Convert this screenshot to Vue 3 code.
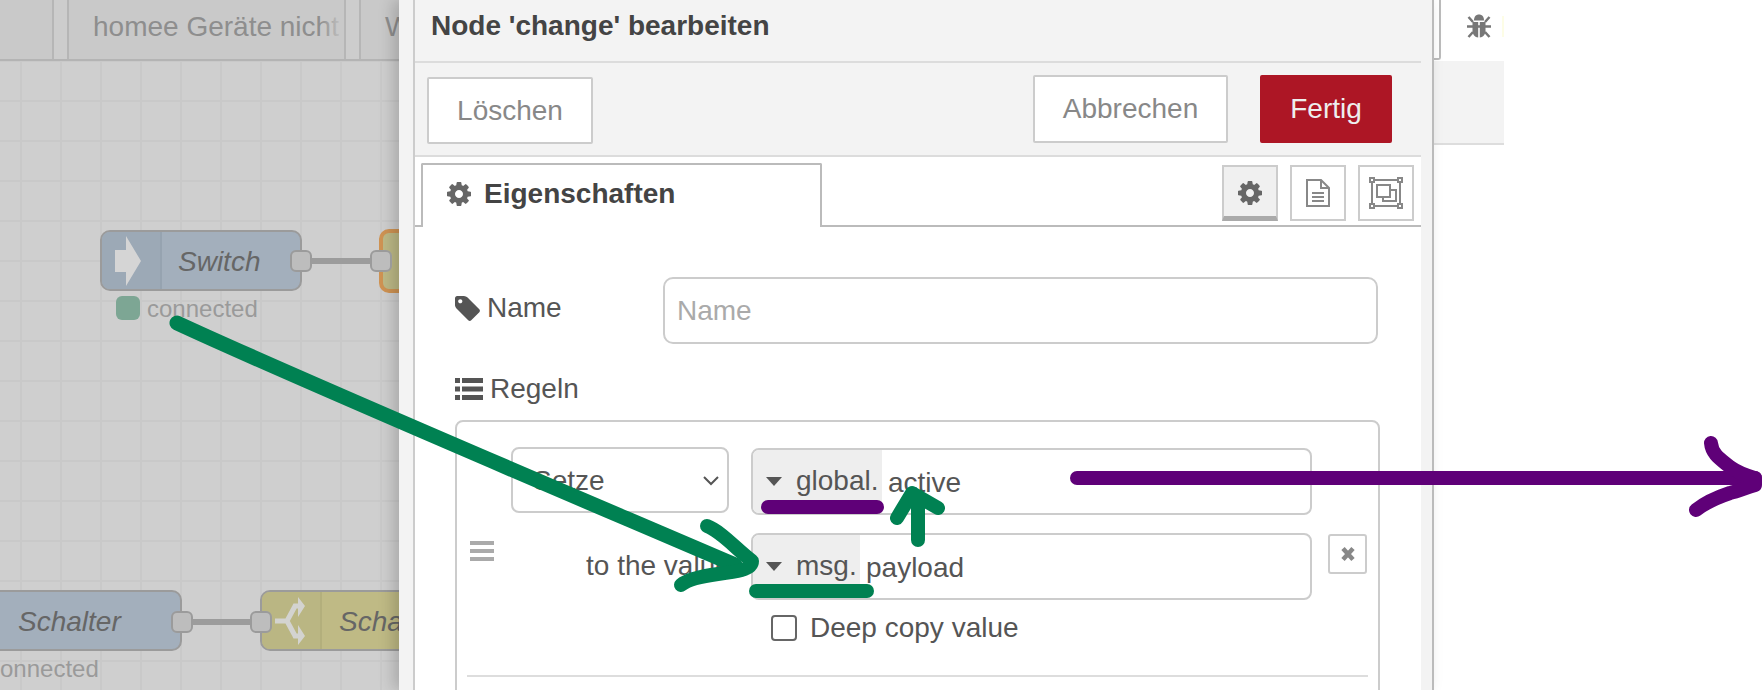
<script setup>
const gear = "M1152 896q0-106-75-181t-181-75-181 75-75 181 75 181 181 75 181-75 75-181zm512-109v222q0 12-8 23t-20 13l-185 28q-19 54-39 91 35 50 107 138 10 12 10 25t-9 23q-27 37-99 108t-94 71q-12 0-26-9l-138-108q-44 23-91 38-16 136-29 186-7 28-36 28h-222q-14 0-24.5-8.5t-11.5-21.5l-28-184q-49-16-90-37l-141 107q-10 9-25 9-14 0-25-11-126-114-165-168-7-10-7-23 0-12 8-23 15-21 51-66.5t54-70.5q-27-50-41-99l-183-27q-13-2-21-12.5t-8-23.5v-222q0-12 8-23t19-13l186-28q14-46 39-92-40-57-107-138-10-12-10-24 0-10 9-23 26-36 98.5-107.5t94.5-71.5q13 0 26 10l138 107q44-23 91-38 16-136 29-186 7-28 36-28h222q14 0 24.5 8.5t11.5 21.5l28 184q49 16 90 37l142-107q9-9 24-9 13 0 25 10 129 119 165 170 7 8 7 22 0 12-8 23-15 21-51 66.5t-54 70.5q26 50 41 98l183 28q13 2 21 12.5t8 23.5z";
const tag = "M576 448q0-53-37.5-90.5t-90.5-37.5-90.5 37.5-37.5 90.5 37.5 90.5 90.5 37.5 90.5-37.5 37.5-90.5zm1067 576q0 53-37 90l-491 492q-39 37-91 37-53 0-90-37l-715-716q-38-37-64.5-101t-26.5-117v-416q0-52 38-90t90-38h416q53 0 117 26.5t102 64.5l715 714q37 39 37 91z";
</script>

<template>
  <div class="screen">
    <section class="workspace">
      <div class="tabbar">
        <div class="wstab first"></div>
        <div class="wstab main"><span>homee Geräte nicht</span></div>
        <div class="wstab last"><span>W</span></div>
      </div>
      <div class="canvas">
        <div class="node blue switch">
          <div class="nicon"><svg width="26" height="50" viewBox="0 0 26 50"><path d="M0 14H11V0L26 25 11 50V36H0Z" fill="#d5d5d5"/></svg></div>
          <div class="nlabel">Switch</div>
        </div>
        <div class="port p1"></div>
        <div class="wire w1"></div>
        <div class="port p2"></div>
        <div class="node selected"></div>
        <div class="status">
          <i></i><span>connected</span>
        </div>
        <div class="node blue schalter">
          <div class="nlabel">Schalter</div>
        </div>
        <div class="port p3"></div>
        <div class="wire w2"></div>
        <div class="port p4"></div>
        <div class="node yellow">
          <div class="nicon"><svg width="32" height="50" viewBox="0 0 32 50"><path d="M0 25H12L19 12 20 10H25M12 25L19 38 20 40H25" fill="none" stroke="#d3d3d0" stroke-width="5"/><path d="M23 1L30 10 23 21ZM23 29L30 40 23 49Z" fill="#d3d3d0"/></svg></div>
          <div class="nlabel">Schalter</div>
        </div>
        <div class="status second"><span>connected</span></div>
      </div>
    </section>

    <section class="tray">
      <div class="dialog">
        <header class="dtitle">Node 'change' bearbeiten</header>
        <div class="toolbar">
          <button class="btn del">Löschen</button>
          <button class="btn cancel">Abbrechen</button>
          <button class="btn done">Fertig</button>
        </div>
        <div class="tabs">
          <div class="tab">
            <svg class="gear" viewBox="0 0 1792 1792"><path :d="gear" fill="#666"/></svg>
            <span>Eigenschaften</span>
          </div>
          <div class="tabbtns">
            <div class="tbtn active"><svg width="28" height="28" viewBox="0 0 1792 1792"><path :d="gear" fill="#666"/></svg></div>
            <div class="tbtn">
              <svg width="24" height="28" viewBox="0 0 24 28" fill="none" stroke="#888" stroke-width="2"><path d="M1 1H15L23 9V27H1Z"/><path d="M15 1V9H23"/><path d="M6 14H18M6 18H18M6 22H18"/></svg>
            </div>
            <div class="tbtn">
              <svg width="34" height="32" viewBox="0 0 34 32" fill="none" stroke="#888" stroke-width="2"><rect x="3" y="3" width="28" height="26"/><rect x="8" y="8" width="13" height="12" fill="#fff"/><path d="M21 13H27V24H14V20"/><g fill="#fff"><rect x="1" y="1" width="4" height="4"/><rect x="29" y="1" width="4" height="4"/><rect x="1" y="27" width="4" height="4"/><rect x="29" y="27" width="4" height="4"/></g></svg>
            </div>
          </div>
        </div>
        <div class="form">
          <div class="namerow">
            <label class="lbl">
              <svg width="25" height="25" viewBox="128 128 1520 1520"><path :d="tag" fill="#555"/></svg>
              <span>Name</span>
            </label>
            <div class="nameinput">Name</div>
          </div>
          <div class="regeln">
            <svg width="28" height="22" viewBox="0 0 28 22" fill="#555"><path d="M0 0h5v5H0zM7 0h21v5H7zM0 8.500h5v5H0zM7 8.500h21v5H7zM0 17h5v5H0zM7 17h21v5H7z"/></svg>
            <span>Regeln</span>
          </div>
          <div class="rules">
            <div class="row1">
              <div class="select"><span>Setze</span>
                <svg width="16" height="10" viewBox="0 0 16 10" fill="none" stroke="#555" stroke-width="2"><path d="M1 1L8 8 15 1"/></svg>
              </div>
              <div class="typed t1">
                <div class="tprefix pg"><i class="caret"></i><span>global.</span></div>
                <span class="tval">active</span>
              </div>
            </div>
            <div class="row2">
              <div class="handle"><i></i><i></i><i></i></div>
              <div class="tolabel">to the value</div>
              <div class="typed t2">
                <div class="tprefix pm"><i class="caret"></i><span>msg.</span></div>
                <span class="tval">payload</span>
              </div>
              <div class="xbtn"><svg width="16" height="16" viewBox="0 0 16 16"><path d="M3 2.500L13 13.500M13 2.500L3 13.500" stroke="#888" stroke-width="4.500"/></svg></div>
            </div>
            <div class="row3">
              <i class="check"></i><span>Deep copy value</span>
            </div>
            <div class="divider"></div>
          </div>
        </div>
      </div>
    </section>

    <aside class="sidebar">
      <div class="sidetop">
        <div class="sideedge"></div>
        <svg class="bug" width="26" height="24" viewBox="0 0 26 24">
          <path d="M8 6.500C8 2.500 10 0.500 13 0.500S18 2.500 18 6.500Z" fill="#777"/>
          <path d="M6.500 8H12.200V23.500C9 23.500 6.500 20 6.500 17ZM13.800 8H19.500V17C19.500 20 17 23.500 13.800 23.500Z" fill="#777"/>
          <path d="M1 12.500H25M2.500 3L7 8M23.500 3L19 8M2.500 23L7 18M23.500 23L19 18" stroke="#777" stroke-width="2.500" fill="none"/>
        </svg>
        <i class="sliver"></i>
      </div>
      <div class="sideband"></div>
    </aside>

    <svg class="scribbles" width="1764" height="690" viewBox="0 0 1764 690" fill="none" stroke-linecap="round" stroke-linejoin="round" stroke-width="14">
      <g stroke="#008152">
        <path stroke-width="15" d="M177 323C300 380 560 490 735 565"/>
        <path d="M707 526C722 532 735 548 752 561C752 570 735 572 718 574C703 576 688 579 681 585"/>
        <path d="M756 591H867"/>
        <path d="M918 540V496M897 518L912 493L938 508"/>
      </g>
      <g stroke="#5f0078">
        <path d="M768 507H877"/>
        <path d="M1077 478H1755"/>
        <path d="M1711 443C1712 455 1722 460 1730 467C1740 474 1748 476 1755 478V485C1745 488 1738 491 1730 493C1718 497 1705 503 1696 510"/>
      </g>
    </svg>
  </div>
</template>

<style>
html, body { margin: 0; background: #fff; }
</style>

<style scoped>
.screen {
  position: relative;
  display: flex;
  width: 1764px;
  height: 690px;
  overflow: hidden;
  background: #fff;
  font-family: "Liberation Sans", Arial, sans-serif;
  font-size: 28px;
  color: #555;
}
.workspace { width: 399px; flex: none; display: flex; flex-direction: column; }
.tabbar {
  height: 59px;
  flex: none;
  display: flex;
  background: #cdcdcd;
  border-bottom: 2px solid #b4b4b4;
}
.wstab { height: 59px; box-sizing: border-box; background: #c9c9c9; border-right: 2px solid #b6b6b6; color: #8e8e8e; position: relative; overflow: hidden; }
.wstab.first { width: 54px; flex: none; }
.wstab.main { width: 279px; flex: none; margin-left: 13px; border-left: 2px solid #b6b6b6; padding: 11px 0 0 24px; white-space: nowrap; }
.wstab.main::after { content: ""; position: absolute; right: 0; top: 0; bottom: 0; width: 24px; background: linear-gradient(to right, rgba(201,201,201,0), #c9c9c9); }
.wstab.last { flex: 1; margin-left: 13px; border-left: 2px solid #b6b6b6; border-right: 0; padding: 11px 0 0 24px; }
.canvas {
  flex: 1;
  position: relative;
  overflow: hidden;
  background-color: #cfcfcf;
  background-image:
    linear-gradient(to right, #c9c9c9 2px, transparent 2px),
    linear-gradient(to bottom, #c9c9c9 2px, transparent 2px);
  background-size: 40px 40px;
  background-position: 20px -1px;
}
.node {
  position: absolute;
  box-sizing: border-box;
  display: flex;
  height: 61px;
  border: 2px solid #9b9b9b;
  border-radius: 10px;
}
.nicon { width: 58px; flex: none; display: flex; align-items: center; justify-content: center; border-right: 2px solid #96a3b0; }
.nlabel { font-style: italic; color: #666; white-space: nowrap; line-height: 59px; }
.blue { background: #a3afbc; }
.blue .nicon { background: #9ca9b6; border-radius: 8px 0 0 8px; }
.switch { left: 100px; top: 169px; width: 202px; }
.switch .nlabel { padding-left: 16px; }
.switch .nicon svg { margin-right: 6px; }
.selected { left: 379px; top: 168px; width: 60px; height: 64px; border: 4px solid #cf9353; background: #bdb986; }
.schalter { left: -10px; top: 529px; width: 192px; }
.schalter .nlabel { padding-left: 26px; }
.yellow { left: 260px; top: 529px; width: 210px; background: #bfba85; }
.yellow .nicon { background: #bab683; border-right-color: #b3af7c; border-radius: 8px 0 0 8px; }
.yellow .nlabel { padding-left: 17px; }
.port { position: absolute; z-index: 2; width: 22px; height: 22px; box-sizing: border-box; background: #bdbdbd; border: 2px solid #9b9b9b; border-radius: 6px; }
.p1 { left: 290px; top: 189px; }
.p2 { left: 370px; top: 189px; }
.p3 { left: 171px; top: 550px; }
.p4 { left: 250px; top: 550px; }
.wire { position: absolute; height: 6px; background: #9c9c9c; }
.w1 { left: 310px; top: 197px; width: 62px; }
.w2 { left: 190px; top: 558px; width: 62px; }
.status { position: absolute; left: 116px; top: 236px; display: flex; align-items: center; gap: 7px; font-size: 24px; color: #9a9a9a; line-height: 24px; }
.status i { width: 24px; height: 24px; border-radius: 6px; background: #7da694; margin-top: -2px; }
.status.second { left: -12px; top: 596px; }

.tray {
  position: relative;
  z-index: 1;
  width: 1035px;
  flex: none;
  box-sizing: border-box;
  padding-left: 14px;
  background: #f3f3f3;
  border-right: 2px solid #bbb;
  box-shadow: -6px 0 14px rgba(0,0,0,.18);
}
.dialog { width: 1008px; height: 690px; box-sizing: border-box; border-left: 2px solid #ccc; background: #fff; }
.dtitle { box-sizing: border-box; padding: 8px 0 0 16px; background: #f3f3f3; border-bottom: 2px solid #dcdcdc; font-weight: 700; color: #444; line-height: 36px; height: 63px; }
.toolbar { box-sizing: border-box; display: flex; align-items: flex-start; padding: 12px 29px 0 12px; background: #f3f3f3; border-bottom: 2px solid #dcdcdc; height: 94px; }
.btn { box-sizing: border-box; height: 68px; font: inherit; background: #fff; color: #888; border: 2px solid #ccc; border-radius: 2px; padding: 0; }
.del { width: 166px; margin: 2px auto 0 0; height: 67px; }
.cancel { width: 195px; margin-right: 32px; }
.done { width: 132px; background: #ad1625; border-color: #ad1625; color: #eee; }
.tabs { height: 70px; box-sizing: border-box; display: flex; padding: 6px 7px 0 6px; border-bottom: 2px solid #bbb; }
.tab { width: 401px; height: 64px; box-sizing: border-box; display: flex; align-items: center; gap: 11px; padding: 0 0 4px 22px; background: #fff; border: 2px solid #bbb; border-bottom: 0; border-radius: 2px 2px 0 0; font-weight: 700; color: #444; }
.gear { width: 28px; height: 28px; }
.tabbtns { margin-left: auto; display: flex; gap: 12px; padding-top: 2px; }
.tbtn { width: 56px; height: 56px; box-sizing: border-box; display: flex; align-items: center; justify-content: center; background: #fff; border: 2px solid #ccc; }
.tbtn.active { background: #f0f0f0; border-bottom: 5px solid #aaa; padding-top: 3px; }
.form { padding: 50px 0 0 39px; }
.namerow { display: flex; }
.lbl { width: 209px; display: flex; align-items: flex-start; gap: 7px; padding-top: 13px; line-height: 36px; }
.lbl svg { margin: 6px 0 0 1px; }
.nameinput { width: 715px; height: 67px; box-sizing: border-box; padding-left: 12px; line-height: 63px; border: 2px solid #ccc; border-radius: 10px; color: #aaa; }
.regeln { display: flex; align-items: center; gap: 7px; height: 36px; margin-top: 27px; padding-left: 1px; }
.rules { box-sizing: border-box; width: 925px; height: 300px; margin: 13px 0 0 1px; padding: 25px 10px 0 0; border: 2px solid #ccc; border-radius: 8px 8px 0 0; }
.row1 { display: flex; padding-left: 54px; gap: 22px; }
.select { box-sizing: border-box; width: 218px; height: 66px; display: flex; align-items: center; justify-content: space-between; padding: 2px 8px 0 20px; border: 2px solid #ccc; border-radius: 8px; }
.typed { box-sizing: border-box; width: 561px; height: 67px; display: flex; border: 2px solid #ccc; border-radius: 8px; overflow: hidden; }
.t1 { margin-top: 1px; }
.tprefix { display: flex; align-items: center; gap: 14px; padding-left: 13px; background: #eee; box-sizing: border-box; line-height: 58px; }
.pg { width: 129px; }
.pm { width: 107px; }
.tprefix span { margin-top: -2px; }
.caret { width: 0; height: 0; border-style: solid; border-width: 9px 8px 0; border-color: #555 transparent transparent; }
.tval { padding: 4px 0 0 6px; line-height: 58px; }
.row2 { display: flex; align-items: flex-start; margin-top: 18px; padding-left: 13px; }
.handle { width: 24px; display: flex; flex-direction: column; gap: 4px; padding-top: 8px; flex: none; }
.handle i { height: 4px; background: #aaa; }
.tolabel { width: 257px; flex: none; box-sizing: border-box; padding: 15px 0 0 92px; white-space: nowrap; line-height: 36px; }
.xbtn { box-sizing: border-box; width: 39px; height: 40px; margin: 1px 0 0 16px; display: flex; align-items: center; justify-content: center; border: 2px solid #ccc; border-radius: 3px; }
.row3 { display: flex; align-items: center; gap: 13px; margin-top: 10px; padding-left: 314px; line-height: 36px; }
.check { width: 26px; height: 26px; box-sizing: border-box; border: 2px solid #666; border-radius: 4px; background: #fff; }
.divider { height: 2px; margin: 29px 0 0 10px; background: #ddd; }

.sidebar { width: 70px; flex: none; display: flex; flex-direction: column; }
.sidetop { position: relative; height: 61px; display: flex; background: #fff; }
.sideedge { width: 7px; height: 60px; box-sizing: border-box; border-right: 2px solid #bbb; border-bottom: 2px solid #bbb; border-radius: 0 0 3px 0; flex: none; }
.bug { margin: 14px 0 0 25px; }
.sliver { width: 2px; height: 21px; margin: 16px 0 0 10px; background: #fdfde6; }
.sideband { height: 84px; box-sizing: border-box; background: #f3f3f3; border-bottom: 2px solid #ddd; }
.scribbles { position: absolute; left: 0; top: 0; z-index: 5; pointer-events: none; }
</style>
